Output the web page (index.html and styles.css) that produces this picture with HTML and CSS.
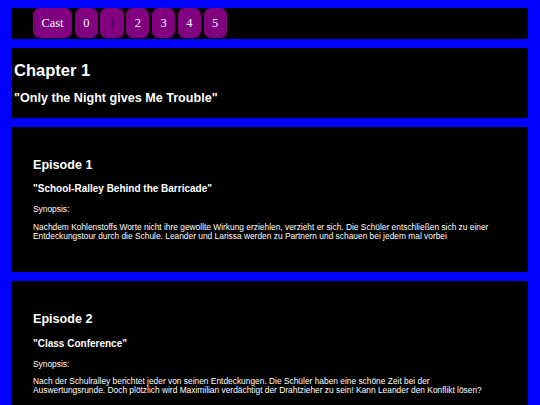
FILE: index.html
```html
<!DOCTYPE html>
<html lang="de">
<head>
<meta charset="utf-8">
<title>Chapter 1</title>
<link rel="stylesheet" href="styles.css">
</head>
<body>
<div class="page">
  <nav class="nav">
    <a class="btn">Cast</a>
    <a class="btn">0</a>
    <a class="btn current">1</a>
    <a class="btn">2</a>
    <a class="btn">3</a>
    <a class="btn">4</a>
    <a class="btn">5</a>
  </nav>
  <section class="chapter">
    <h1 class="chapter-title">Chapter 1</h1>
    <h2 class="chapter-sub">"Only the Night gives Me Trouble"</h2>
  </section>
  <section class="episode">
    <h3 class="ep-title">Episode 1</h3>
    <h4 class="ep-sub">"School-Ralley Behind the Barricade"</h4>
    <p class="ep-label">Synopsis:</p>
    <p class="ep-text">Nachdem Kohlenstoffs Worte nicht ihre gewollte Wirkung erziehlen, verzieht er sich. Die Schüler entschließen sich zu einer Entdeckungstour durch die Schule. Leander und Larissa werden zu Partnern und schauen bei jedem mal vorbei</p>
  </section>
  <section class="episode">
    <h3 class="ep-title">Episode 2</h3>
    <h4 class="ep-sub">"Class Conference"</h4>
    <p class="ep-label">Synopsis:</p>
    <p class="ep-text">Nach der Schulralley berichtet jeder von seinen Entdeckungen. Die Schüler haben eine schöne Zeit bei der Auswertungsrunde. Doch plötzlich wird Maximilian verdächtigt der Drahtzieher zu sein! Kann Leander den Konflikt lösen?</p>
  </section>
</div>
</body>
</html>
```
FILE: styles.css
```css
html, body {
  margin: 0;
  padding: 0;
  background: #0000ff;
}
body {
  padding: 8px 12px;
  font-family: "Liberation Sans", Arial, sans-serif;
  color: #ffffff;
}
.page {
  display: flex;
  flex-direction: column;
}
.nav {
  height: 31px;
  background: #000;
  padding-left: 21px;
  display: flex;
  align-items: flex-start;
  gap: 2.6px;
}
.btn {
  height: 30px;
  line-height: 30px;
  padding: 0 8.5px;
  background: #800080;
  color: #ffffff;
  border-radius: 7px;
  font-family: "Liberation Serif", "Times New Roman", serif;
  font-size: 12.4px;
}
.btn.current {
  color: #3c003c;
}
.chapter {
  margin-top: 9px;
  height: 70px;
  box-sizing: border-box;
  background: #000;
  padding: 12.6px 0 0 2px;
}
.chapter-title {
  margin: 0;
  font-size: 16.5px;
  line-height: 19px;
  font-weight: bold;
}
.chapter-sub {
  margin: 11.4px 0 0;
  font-size: 12.6px;
  line-height: 14.5px;
  font-weight: bold;
}
.episode {
  margin-top: 8.7px;
  background: #000;
  padding: 31px 21px 31px 21px;
}
.ep-title {
  margin: 0;
  font-size: 12.6px;
  line-height: 14.5px;
  font-weight: bold;
}
.ep-sub {
  margin: 11px 0 0;
  font-size: 10px;
  line-height: 11.5px;
  font-weight: bold;
}
.ep-label {
  margin: 10.5px 0 0;
  font-size: 8.4px;
  line-height: 9.6px;
}
.ep-text {
  margin: 7.8px 0 0;
  font-size: 8.4px;
  line-height: 9.4px;
  max-width: 462px;
}
```
